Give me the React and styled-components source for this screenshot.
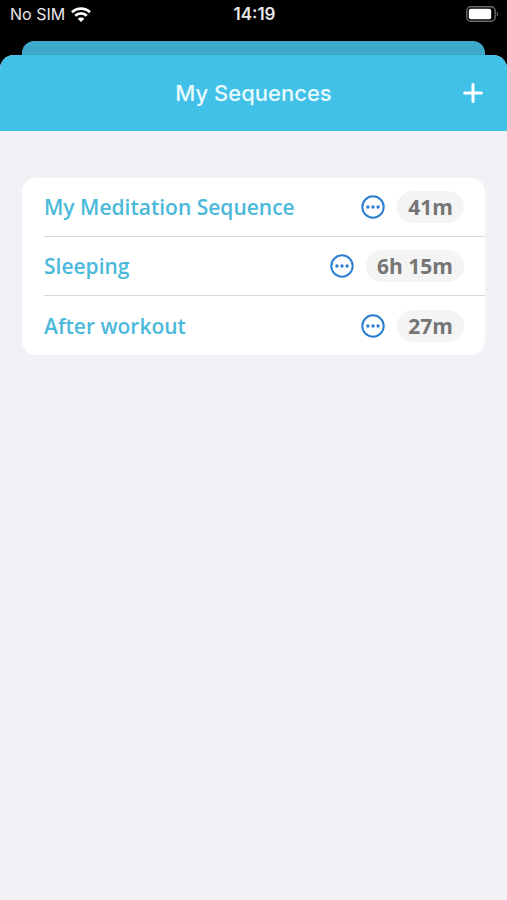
import styled, { createGlobalStyle } from "styled-components";

const sequences = [
  { name: "My Meditation Sequence", duration: "41m" },
  { name: "Sleeping", duration: "6h 15m" },
  { name: "After workout", duration: "27m" },
];

const App = () => {
  return (
    <Screen>
      <GlobalStyle />
      <StatusBar>
        <Carrier>
          No SIM
          <WifiIcon />
        </Carrier>
        <Clock>14:19</Clock>
        <BatteryIcon />
      </StatusBar>
      <BackSheet />
      <Sheet>
        <Header>
          <Title>My Sequences</Title>
          <AddButton type="button" aria-label="Add sequence">
            <svg width="20" height="20" viewBox="0 0 20 20" fill="none">
              <path
                d="M10 1.6v16.8M1.6 10h16.8"
                stroke="#fff"
                strokeWidth="3"
                strokeLinecap="round"
              />
            </svg>
          </AddButton>
        </Header>
        <List>
          {sequences.map(({ name, duration }) => {
            return (
              <Row key={name}>
                <Name>{name}</Name>
                <MoreButton type="button" aria-label={`Options for ${name}`}>
                  <MoreIcon />
                </MoreButton>
                <Duration>{duration}</Duration>
              </Row>
            );
          })}
        </List>
      </Sheet>
    </Screen>
  );
};

const WifiIcon = () => (
  <svg width="20" height="15" viewBox="0 0 20 15" fill="none">
    <path
      d="M1 5.3C6 .4 14 .4 19 5.3M4.2 8.7C7.4 5.6 12.6 5.6 15.8 8.7"
      stroke="#fff"
      strokeWidth="2.7"
    />
    <path
      d="M10 15L6.7 11.8C8.5 10 11.5 10 13.3 11.8Z"
      fill="#fff"
    />
  </svg>
);

const BatteryIcon = () => (
  <svg width="33" height="16" viewBox="0 0 33 16" fill="none">
    <rect x=".8" y=".8" width="28.4" height="14.4" rx="4" stroke="#6a6a6d" strokeWidth="1.4" />
    <rect x="2.8" y="2.8" width="22.4" height="10.4" rx="2" fill="#fff" />
    <path d="M30.8 5.6c1.8 .6 1.8 4.2 0 4.8z" fill="#6a6a6d" />
  </svg>
);

const MoreIcon = () => (
  <svg width="24" height="24" viewBox="0 0 24 24" fill="none">
    <circle cx="12" cy="12" r="10.7" stroke="#2b7fd0" strokeWidth="2" />
    <circle cx="6.9" cy="12" r="1.7" fill="#2b7fd0" />
    <circle cx="12" cy="12" r="1.7" fill="#2b7fd0" />
    <circle cx="17.1" cy="12" r="1.7" fill="#2b7fd0" />
  </svg>
);

const GlobalStyle = createGlobalStyle`
  * {
    box-sizing: border-box;
  }

  body {
    margin: 0;
    background: #000;
    font-family: Inter, "Liberation Sans", sans-serif;
  }

  button {
    display: flex;
    padding: 0;
    border: 0;
    background: none;
    cursor: pointer;
  }

  svg {
    display: block;
  }
`;

const Screen = styled.div`
  display: flex;
  flex-direction: column;
  min-height: 100vh;
`;

const StatusBar = styled.div`
  display: grid;
  grid-template-columns: 1fr auto 1fr;
  align-items: center;
  height: 41px;
  padding: 0 8px 13px 10px;
  color: #e8e8e8;
  font-size: 16px;
  line-height: 20px;

  > :last-child {
    justify-self: end;
  }
`;

const Carrier = styled.div`
  display: flex;
  align-items: center;
  gap: 6px;
`;

const Clock = styled.div`
  font-size: 17px;
  font-weight: 600;
`;

const BackSheet = styled.div`
  height: 14px;
  margin: 0 22px;
  border-radius: 12px 12px 0 0;
  background: #3ea9cb;
`;

const Sheet = styled.main`
  flex: 1;
  overflow: hidden;
  border-radius: 14px 14px 0 0;
  background: #f1f1f6;
`;

const Header = styled.header`
  display: grid;
  grid-template-columns: 1fr auto 1fr;
  align-items: center;
  height: 76px;
  padding: 0 24px;
  background: #42c1e8;
`;

const Title = styled.h1`
  grid-column: 2;
  margin: 0;
  color: #e9fbff;
  font-size: 22px;
  font-weight: 500;
  line-height: 28px;
`;

const AddButton = styled.button`
  justify-self: end;
`;

const List = styled.ul`
  margin: 47px 22px 0;
  padding: 0 0 0 22px;
  border-radius: 14px;
  background: #fff;
  list-style: none;
`;

const Row = styled.li`
  display: flex;
  align-items: center;
  gap: 12px;
  height: 59px;
  padding-right: 21px;
  font-family: "Open Sans", "Noto Sans", sans-serif;
  font-size: 21px;
  line-height: 32px;

  &:not(:last-child) {
    border-bottom: 1px solid #d8d8da;
  }
`;

const Name = styled.span`
  flex: 1;
  color: #4bb9da;
  font-weight: 600;
`;

const MoreButton = styled.button``;

const Duration = styled.span`
  padding: 0 11px;
  border-radius: 16px;
  background: #f4f4f4;
  color: #757575;
  font-weight: 700;
`;

export default App;
